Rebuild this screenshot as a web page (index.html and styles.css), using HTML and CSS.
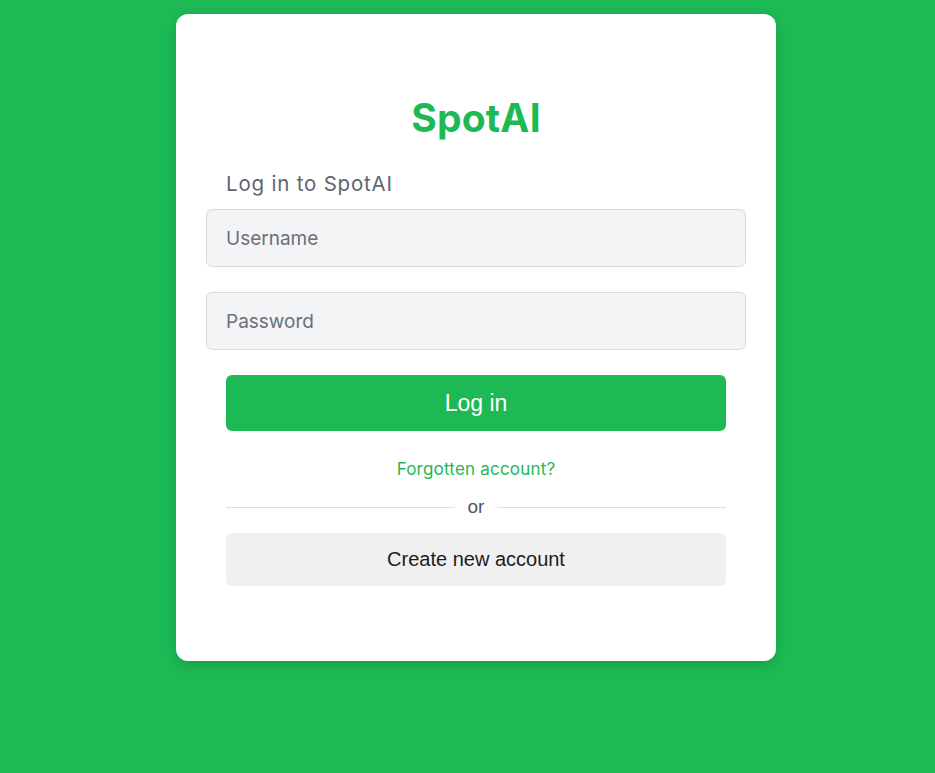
FILE: index.html
```html
<!DOCTYPE html>
<html lang="en">
<head>
<meta charset="utf-8">
<title>SpotAI - Log in</title>
<link rel="stylesheet" href="styles.css">
</head>
<body>
<main class="page">
  <div class="card">
    <h1 class="brand">SpotAI</h1>
    <p class="subtitle">Log in to SpotAI</p>
    <form class="form">
      <input class="field" type="text" placeholder="Username">
      <input class="field" type="password" placeholder="Password">
      <div class="actions">
        <button type="button" class="btn-primary">Log in</button>
        <a class="forgot" href="#">Forgotten account?</a>
        <div class="divider"><span class="line"></span><span class="or">or</span><span class="line"></span></div>
        <button type="button" class="btn-secondary">Create new account</button>
      </div>
    </form>
  </div>
</main>
</body>
</html>
```
FILE: styles.css
```css
* { box-sizing: border-box; }
html, body { margin: 0; padding: 0; }
body {
  background: #1db954;
  font-family: "Inter", "DejaVu Sans", sans-serif;
  min-height: 773px;
}
.page {
  display: flex;
  justify-content: center;
  padding: 14px 0 0 17px;
}
.card {
  width: 600px;
  height: 647px;
  background: #fff;
  border-radius: 12px;
  box-shadow: 0 4px 12px rgba(0,0,0,0.15);
  padding: 74px 30px 0;
}
.brand {
  margin: 0;
  text-align: center;
  color: #1db954;
  font-size: 39px;
  font-weight: 700;
  line-height: 60px;
  letter-spacing: 0.2px;
}
.subtitle {
  margin: 24px 0 0 20px;
  font-size: 20.5px;
  letter-spacing: 0.8px;
  line-height: 24px;
  color: #5f6670;
}
.form {
  margin-top: 13px;
  display: flex;
  flex-direction: column;
}
.field {
  height: 58px;
  width: 540px;
  border: 1px solid #d8dade;
  background: #f3f4f6;
  border-radius: 6px;
  padding: 0 19px;
  font-family: inherit;
  font-size: 19px;
  color: #333;
  margin-bottom: 25px;
  outline: none;
}
.field::placeholder { color: #6b7079; }
.actions {
  padding: 0 20px;
  display: flex;
  flex-direction: column;
  align-items: center;
}
.btn-primary {
  width: 500px;
  height: 56px;
  border: none;
  border-radius: 6px;
  background: #1db954;
  color: #fff;
  font-family: "Liberation Sans", Arial, sans-serif;
  font-size: 23px;
  cursor: pointer;
}
.forgot {
  margin-top: 28px;
  color: #1db954;
  text-decoration: none;
  font-size: 17px;
  letter-spacing: 0.2px;
  line-height: 20px;
}
.divider {
  margin-top: 17px;
  width: 500px;
  display: flex;
  align-items: center;
  gap: 13px;
}
.line {
  flex: 1;
  height: 1px;
  background: #dcdee2;
}
.or {
  font-family: "Liberation Sans", Arial, sans-serif;
  font-size: 19px;
  color: #4b5563;
  line-height: 22px;
}
.btn-secondary {
  margin-top: 15px;
  width: 500px;
  height: 53px;
  border: none;
  border-radius: 6px;
  background: #f0f0f0;
  color: #1c1c1c;
  font-family: "Liberation Sans", Arial, sans-serif;
  font-size: 20px;
  cursor: pointer;
}
```
